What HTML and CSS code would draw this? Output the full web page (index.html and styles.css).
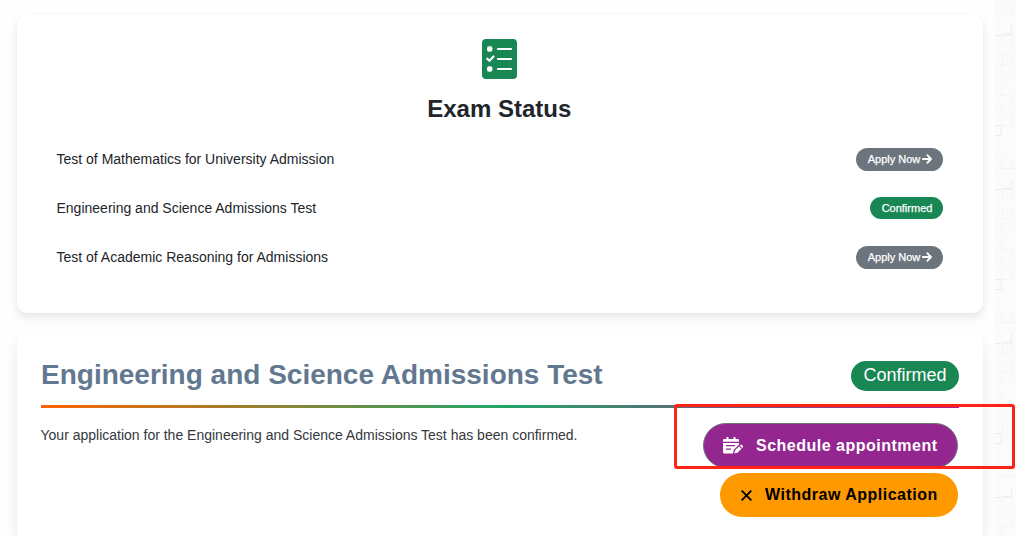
FILE: index.html
```html
<!DOCTYPE html>
<html lang="en">
<head>
    <meta charset="UTF-8">
    <meta name="viewport" content="width=device-width, initial-scale=1.0">
    <title>Exam Status</title>
    <link rel="stylesheet" href="styles.css">
</head>
<body>
    <div class="page">
        <main class="content">
            <section class="card status-card">
                <svg class="status-icon" viewBox="0 0 35 40">
                    <rect width="35" height="40" rx="4" fill="#198754"/>
                    <g fill="#fff">
                        <rect x="5" y="7.3" width="5.4" height="5.4" rx="2"/>
                        <rect x="5" y="27.3" width="5.4" height="5.4" rx="2"/>
                    </g>
                    <path d="M16 10h13M16 20h13M16 30h13" stroke="#fff" stroke-width="2.2" stroke-linecap="round"/>
                    <path d="M5.3 19.7l2.2 2.1 4-4.3" fill="none" stroke="#fff" stroke-width="2.2" stroke-linecap="round" stroke-linejoin="round"/>
                </svg>
                <h2 class="status-title">Exam Status</h2>
                <div class="exam-list">
                    <div class="exam-row">
                        <span class="exam-name">Test of Mathematics for University Admission</span>
                        <a class="badge badge-apply">Apply Now <svg class="arrow" viewBox="0 0 10 10"><path d="M.8 5h8M5.3 1.2L9 5 5.3 8.8"/></svg></a>
                    </div>
                    <div class="exam-row">
                        <span class="exam-name">Engineering and Science Admissions Test</span>
                        <span class="badge badge-confirmed">Confirmed</span>
                    </div>
                    <div class="exam-row">
                        <span class="exam-name">Test of Academic Reasoning for Admissions</span>
                        <a class="badge badge-apply">Apply Now <svg class="arrow" viewBox="0 0 10 10"><path d="M.8 5h8M5.3 1.2L9 5 5.3 8.8"/></svg></a>
                    </div>
                </div>
            </section>

            <section class="card detail-card">
                <div class="detail-header">
                    <h1 class="detail-title">Engineering and Science Admissions Test</h1>
                    <span class="badge-large">Confirmed</span>
                </div>
                <div class="divider"></div>
                <div class="detail-body">
                    <p class="detail-text">Your application for the Engineering and Science Admissions Test has been confirmed.</p>
                    <div class="actions">
                        <button class="btn btn-schedule">
                            <svg class="calendar" viewBox="0 0 20 17">
                                <path d="M1 2h2.5V.8a1 1 0 0 1 2 0V2h5V.8a1 1 0 0 1 2 0V2H15a1 1 0 0 1 1 1v1.7H0V3a1 1 0 0 1 1-1z"/>
                                <path d="M0 6h16v1.5L10.8 12.8 10 16.5H1.5A1.5 1.5 0 0 1 0 15zM3 8v1.3h9V8zM3 11.5v1.3h5v-1.3z" fill-rule="evenodd"/>
                                <path d="M11.3 16.5l.8-3.2 4-4 2.4 2.4-4 4zM16.8 8.6l.7-.7a1 1 0 0 1 1.4 0l1 1a1 1 0 0 1 0 1.4l-.7.7z"/>
                            </svg>
                            <span>Schedule appointment</span>
                        </button>
                        <button class="btn btn-withdraw">
                            <svg class="cross" viewBox="0 0 11 11"><path d="M1.2 1.2l8.6 8.6M9.8 1.2L1.2 9.8"/></svg>
                            <span>Withdraw Application</span>
                        </button>
                    </div>
                </div>
            </section>
        </main>

        <svg class="texture">
            <defs>
                <pattern id="tiles" width="21" height="154" patternUnits="userSpaceOnUse">
                    <path d="M0 4.5h7v10H0M7.5 14.5h10v-10M7.5 35.5h10v10h-10zM7.5 54.5h10v10h-10zM0 64.5h7v10H0M0 85.5h7v10H0M7.5 95.5h10v10M0 105.5h7v10M7.5 115.5h10v10h-10zM0 135.5h7M17.5 14.5h4M17.5 75.5h4M17.5 105.5h4" fill="none" stroke="#f5f5f5"/>
                    <path d="M0 35.5h6M7.5 34.5h9v-9M0 125.5h6v10H0" fill="none" stroke="#ededed"/>
                </pattern>
            </defs>
            <rect width="21" height="536" fill="url(#tiles)"/>
        </svg>
    </div>

    <div class="highlight"></div>
</body>
</html>
```

FILE: styles.css
```css
* {
    box-sizing: border-box;
}
body {
    margin: 0;
    background-color: #fbfbfb;
    font-family: "Liberation Sans", Arial, sans-serif;
    color: #212529;
}
.page {
    display: flex;
    height: 536px;
}
.content {
    display: flex;
    flex-direction: column;
    gap: 20px;
    width: 995px;
    padding: 15px 12px 0 17px;
    overflow: hidden;
    background-color: #fefefe;
}
.texture {
    width: 21px;
    height: 536px;
}
.card {
    background-color: #fff;
    border-radius: 10px;
    box-shadow: 0 4px 10px rgba(0, 0, 0, 0.1);
}
.status-card {
    height: 298px;
    padding: 24px 41px 24px 39.5px;
    display: flex;
    flex-direction: column;
    align-items: center;
}
.status-icon {
    width: 35px;
    height: 40px;
}
.status-title {
    margin: 15px 0 0;
    font-size: 24px;
    line-height: 30px;
}
.exam-list {
    width: 100%;
    margin-top: 11px;
}
.exam-row {
    display: flex;
    justify-content: space-between;
    align-items: center;
    height: 49px;
    margin-right: -1px;
}
.exam-name {
    padding-bottom: 2px;
    font-size: 14px;
}
.badge {
    display: flex;
    align-items: center;
    justify-content: center;
    gap: 2px;
    height: 23px;
    padding: 0 0 2px 1px;
    border-radius: 12px;
    color: #fff;
    font-size: 11px;
    -webkit-text-stroke: 0.25px #fff;
}
.badge-apply {
    width: 87px;
    background-color: #6c757d;
}
.badge-confirmed {
    width: 73px;
    height: 22px;
    margin-bottom: 1px;
    padding-bottom: 0;
    background-color: #198754;
}
.arrow {
    width: 10px;
    height: 10px;
    fill: none;
    stroke: #fff;
    stroke-width: 1.8;
    stroke-linecap: round;
    stroke-linejoin: round;
}
.detail-card {
    flex: 1;
    padding: 28px 24px 0;
    border-radius: 10px 10px 0 0;
    box-shadow: 0 8px 14px rgba(0, 0, 0, 0.09);
}
.detail-header {
    display: flex;
    justify-content: space-between;
    height: 44px;
}
.detail-title {
    margin: -3px 0 0;
    color: #627890;
    font-size: 28px;
    line-height: 34px;
}
.badge-large {
    width: 108px;
    height: 30px;
    border-radius: 15px;
    background-color: #198754;
    color: #fff;
    font-size: 18px;
    line-height: 29px;
    text-align: center;
}
.divider {
    height: 3px;
    background: linear-gradient(to right, #ff6200, #20a667 50%, #b5178f);
}
.detail-body {
    display: flex;
    justify-content: space-between;
    padding: 15px 1px 0 0;
}
.detail-text {
    margin: 4px 0 0 -0.5px;
    font-size: 14px;
    line-height: 17px;
    color: #34383c;
}
.actions {
    display: flex;
    flex-direction: column;
    align-items: flex-end;
    gap: 5px;
}
.btn {
    display: flex;
    align-items: center;
    height: 45px;
    padding: 0 20px;
    border: none;
    border-radius: 23px;
    font-family: inherit;
    font-size: 16px;
    font-weight: bold;
    letter-spacing: 0.5px;
    white-space: nowrap;
}
.btn-schedule {
    width: 255px;
    gap: 13px;
    padding-left: 19px;
    border: 1px solid #6c757d;
    background-color: #93278f;
    color: #fff;
}
.btn-withdraw {
    width: 238px;
    height: 44px;
    gap: 13px;
    background-color: #ff9900;
    color: #000;
}
.calendar {
    width: 20px;
    height: 17px;
    fill: #fff;
    flex-shrink: 0;
}
.cross {
    width: 11px;
    height: 11px;
    margin-left: 1px;
    stroke: #000;
    stroke-width: 1.9;
    stroke-linecap: round;
    flex-shrink: 0;
}
/* red frame drawn over the schedule button */
.highlight {
    position: absolute;
    left: 674px;
    top: 404px;
    width: 341px;
    height: 65px;
    border: 3px solid #ff2216;
    border-radius: 3px;
}
```
